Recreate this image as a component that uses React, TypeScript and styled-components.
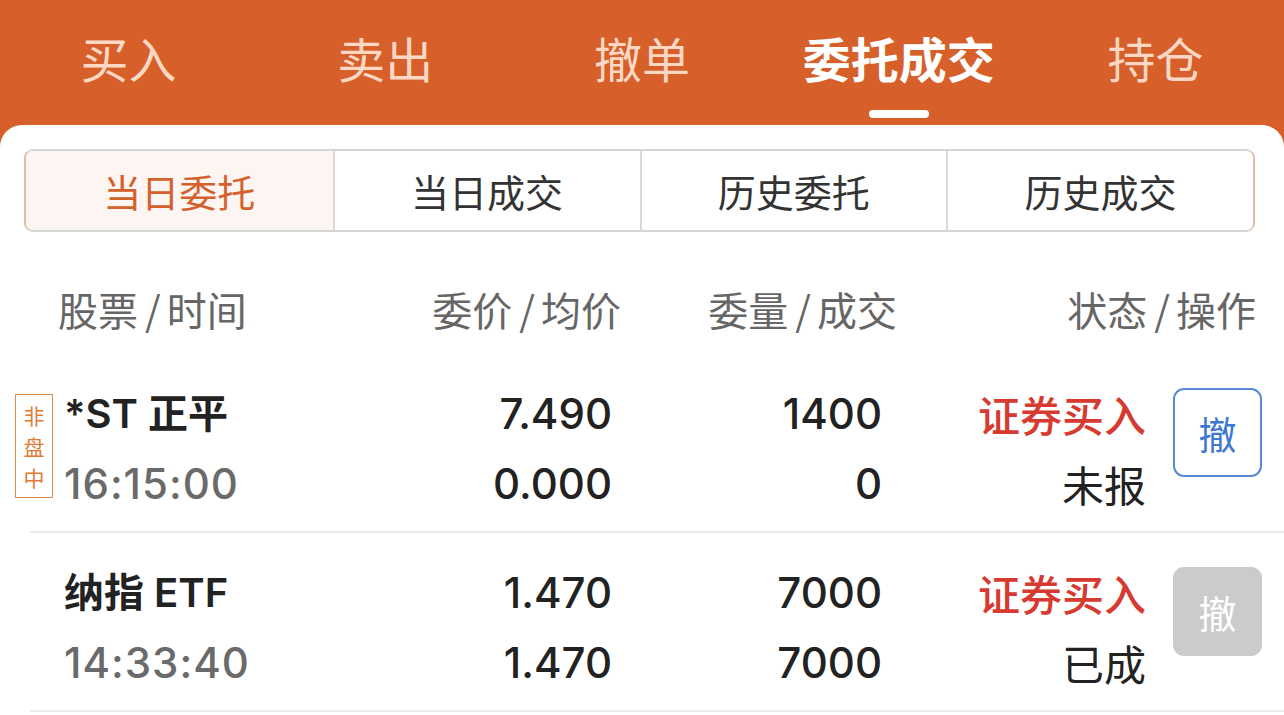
import React from "react";
import styled, { createGlobalStyle } from "styled-components";

const GlobalStyle = createGlobalStyle`
  html, body { margin: 0; padding: 0; background: #d65f2a; }
  body { font-family: Inter, "Noto Sans CJK SC", sans-serif; }
  * { box-sizing: border-box; }
`;

const Page = styled.div`
  width: 1284px;
  height: 715px;
  overflow: hidden;
  background: #d65f2a;
  display: flex;
  flex-direction: column;
`;

const TabBar = styled.div`
  height: 125px;
  display: grid;
  grid-template-columns: repeat(5, 1fr);
  flex-shrink: 0;
`;

const TabItem = styled.div<{ $active?: boolean }>`
  display: flex;
  flex-direction: column;
  align-items: center;
  padding-top: 27px;
  font-family: "Noto Sans CJK SC", sans-serif;
  font-size: 48px;
  line-height: 60px;
  font-weight: ${(p) => (p.$active ? 700 : 400)};
  color: ${(p) => (p.$active ? "#ffffff" : "#fcd8c4")};
`;

const Indicator = styled.div`
  width: 60px;
  height: 8px;
  border-radius: 4px;
  background: #ffffff;
  margin-top: 23px;
`;

const Panel = styled.div`
  flex: 1;
  background: #ffffff;
  border-radius: 22px 22px 0 0;
  padding-top: 24px;
`;

const Segments = styled.div`
  margin: 0 29px 0 24px;
  height: 83px;
  display: grid;
  grid-template-columns: repeat(4, 1fr);
  border: 2px solid #d6d6d6;
  border-left-color: #e2bca8;
  border-right-color: #e2bca8;
  border-radius: 9px;
  overflow: hidden;
`;

const Segment = styled.div<{ $active?: boolean }>`
  display: flex;
  align-items: center;
  justify-content: center;
  font-family: "Noto Sans CJK SC", sans-serif;
  font-size: 38px;
  color: ${(p) => (p.$active ? "#d4602c" : "#333333")};
  background: ${(p) => (p.$active ? "#fcf5f1" : "#ffffff")};
  & + & {
    border-left: 2px solid #d9d9d9;
  }
`;

const HeaderRow = styled.div`
  display: grid;
  grid-template-columns: 363px 200px 276px 359px;
  padding: 56px 0 0 58px;
  height: 122px;
  font-family: "Noto Sans CJK SC", sans-serif;
  font-size: 40px;
  line-height: 42px;
  color: #666666;
`;

const HeadCell = styled.div<{ $right?: boolean }>`
  text-align: ${(p) => (p.$right ? "right" : "left")};
  white-space: nowrap;
`;

const Slash = styled.span`
  margin: 0 6px 0 7px;
`;

const Row = styled.div`
  margin-left: 30px;
  padding: 30px 0 0 34px;
  height: 179px;
  border-bottom: 2px solid #ececec;
  display: flex;
  align-items: flex-start;
`;

const Cell = styled.div<{ $w: number; $right?: boolean }>`
  width: ${(p) => p.$w}px;
  flex-shrink: 0;
  display: flex;
  flex-direction: column;
  gap: 10px;
  align-items: ${(p) => (p.$right ? "flex-end" : "flex-start")};
  position: relative;
`;

const Line = styled.div<{ $tone?: "dark" | "gray" | "red"; $weight?: number }>`
  height: 60px;
  line-height: 60px;
  font-size: 42px;
  font-weight: ${(p) => p.$weight ?? 500};
  white-space: nowrap;
  color: ${(p) =>
    p.$tone === "gray" ? "#6a6a6a" : p.$tone === "red" ? "#d63a30" : "#222222"};
`;

const NameText = styled(Line)`
  font-size: 40px;
  font-weight: 600;
`;

const TimeText = styled(Line)`
  letter-spacing: 1px;
`;

const StatusText = styled(Line)`
  font-family: "Noto Sans CJK SC", sans-serif;
`;

const Tag = styled.div`
  position: absolute;
  left: -49px;
  top: 10px;
  width: 38px;
  height: 104px;
  border: 1.5px solid #e08b50;
  display: flex;
  flex-direction: column;
  align-items: center;
  justify-content: center;
  font-family: "Noto Sans CJK SC", sans-serif;
  font-size: 21px;
  line-height: 31px;
  color: #e07a35;
`;

const CancelButton = styled.div<{ $disabled?: boolean }>`
  margin: 4px 0 0 27px;
  width: 89px;
  height: 89px;
  border-radius: 11px;
  display: flex;
  align-items: center;
  justify-content: center;
  font-family: "Noto Sans CJK SC", sans-serif;
  font-size: 38px;
  ${(p) =>
    p.$disabled
      ? "background: #cbcbcb; color: #ffffff; border: 2px solid #cbcbcb;"
      : "background: #ffffff; color: #3d78d2; border: 2px solid #5a8ad6;"}
`;

type Order = {
  name: string;
  time: string;
  price: string;
  avg: string;
  qty: string;
  done: string;
  action: string;
  status: string;
  tag?: string;
  canCancel: boolean;
};

const orders: Order[] = [
  {
    name: "*ST 正平",
    time: "16:15:00",
    price: "7.490",
    avg: "0.000",
    qty: "1400",
    done: "0",
    action: "证券买入",
    status: "未报",
    tag: "非盘中",
    canCancel: true,
  },
  {
    name: "纳指 ETF",
    time: "14:33:40",
    price: "1.470",
    avg: "1.470",
    qty: "7000",
    done: "7000",
    action: "证券买入",
    status: "已成",
    canCancel: false,
  },
];

const tabs = ["买入", "卖出", "撤单", "委托成交", "持仓"];
const segs = ["当日委托", "当日成交", "历史委托", "历史成交"];
const heads: [string, string][] = [
  ["股票", "时间"],
  ["委价", "均价"],
  ["委量", "成交"],
  ["状态", "操作"],
];

export default function App() {
  return (
    <Page>
      <GlobalStyle />
      <TabBar>
        {tabs.map((t, i) => (
          <TabItem key={t} $active={i === 3}>
            {t}
            {i === 3 && <Indicator />}
          </TabItem>
        ))}
      </TabBar>
      <Panel>
        <Segments>
          {segs.map((s, i) => (
            <Segment key={s} $active={i === 0}>
              {s}
            </Segment>
          ))}
        </Segments>
        <HeaderRow>
          {heads.map(([a, b], i) => (
            <HeadCell key={a} $right={i > 0}>
              {a}
              <Slash>/</Slash>
              {b}
            </HeadCell>
          ))}
        </HeaderRow>
        {orders.map((o) => (
          <Row key={o.name}>
            <Cell $w={348}>
              {o.tag && (
                <Tag>
                  {o.tag.split("").map((c) => (
                    <span key={c}>{c}</span>
                  ))}
                </Tag>
              )}
              <NameText>{o.name}</NameText>
              <TimeText $tone="gray">{o.time}</TimeText>
            </Cell>
            <Cell $w={200} $right>
              <Line>{o.price}</Line>
              <Line>{o.avg}</Line>
            </Cell>
            <Cell $w={270} $right>
              <Line>{o.qty}</Line>
              <Line>{o.done}</Line>
            </Cell>
            <Cell $w={264} $right>
              <StatusText $tone="red">{o.action}</StatusText>
              <StatusText $weight={400}>{o.status}</StatusText>
            </Cell>
            <CancelButton $disabled={!o.canCancel}>撤</CancelButton>
          </Row>
        ))}
      </Panel>
    </Page>
  );
}
